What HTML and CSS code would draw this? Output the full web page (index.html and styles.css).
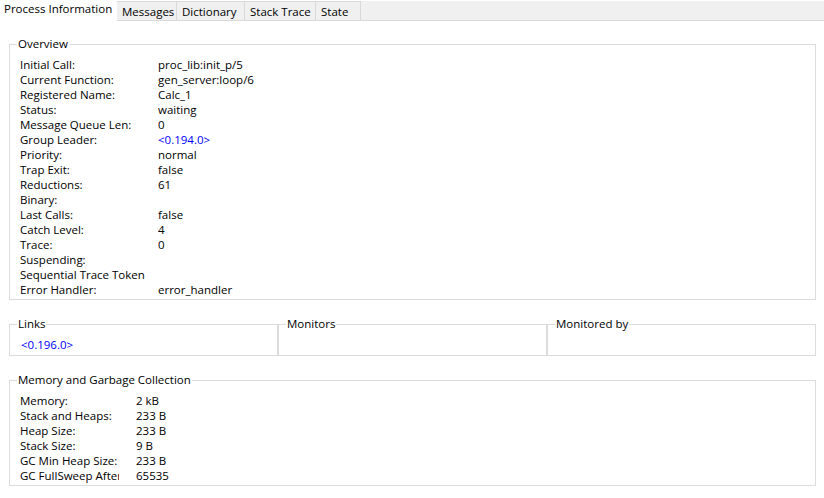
FILE: index.html
```html
<!DOCTYPE html>
<html>
<head>
<meta charset="utf-8">
<link rel="stylesheet" href="styles.css">
</head>
<body>
<div class="tabs">
  <div class="tab active w-proc">Process Information</div>
  <div class="tab w-msg">Messages</div>
  <div class="tab w-dict">Dictionary</div>
  <div class="tab w-stack">Stack Trace</div>
  <div class="tab w-state">State</div>
  <div class="tab-fill"></div>
</div>
<div class="page">
  <fieldset class="group">
    <legend>Overview</legend>
    <div class="grid overview">
      <span>Initial Call:</span><span>proc_lib:init_p/5</span>
      <span>Current Function:</span><span>gen_server:loop/6</span>
      <span>Registered Name:</span><span>Calc_1</span>
      <span>Status:</span><span>waiting</span>
      <span>Message Queue Len:</span><span>0</span>
      <span>Group Leader:</span><span class="link">&lt;0.194.0&gt;</span>
      <span>Priority:</span><span>normal</span>
      <span>Trap Exit:</span><span>false</span>
      <span>Reductions:</span><span>61</span>
      <span>Binary:</span><span></span>
      <span>Last Calls:</span><span>false</span>
      <span>Catch Level:</span><span>4</span>
      <span>Trace:</span><span>0</span>
      <span>Suspending:</span><span></span>
      <span>Sequential Trace Token</span><span></span>
      <span>Error Handler:</span><span>error_handler</span>
    </div>
  </fieldset>
  <div class="triple">
    <fieldset class="group small">
      <legend>Links</legend>
      <div class="list"><span class="link">&lt;0.196.0&gt;</span></div>
    </fieldset>
    <fieldset class="group small">
      <legend>Monitors</legend>
      <div class="list"></div>
    </fieldset>
    <fieldset class="group small">
      <legend>Monitored by</legend>
      <div class="list"></div>
    </fieldset>
  </div>
  <fieldset class="group">
    <legend>Memory and Garbage Collection</legend>
    <div class="grid memory">
      <span>Memory:</span><span>2 kB</span>
      <span>Stack and Heaps:</span><span>233 B</span>
      <span>Heap Size:</span><span>233 B</span>
      <span>Stack Size:</span><span>9 B</span>
      <span>GC Min Heap Size:</span><span>233 B</span>
      <span>GC FullSweep After</span><span>65535</span>
    </div>
  </fieldset>
</div>
</body>
</html>
```
FILE: styles.css
```css
html, body {
  margin: 0;
  padding: 0;
  background: #ffffff;
}
body {
  font-family: "Open Sans", "Noto Sans", sans-serif;
  font-size: 11.5px;
  color: #000000;
  width: 824px;
  height: 498px;
  overflow: hidden;
}
.tabs {
  display: flex;
  height: 21px;
  background: #ffffff;
}
.tab {
  box-sizing: border-box;
  flex: none;
  height: 20px;
  margin-top: 1px;
  padding: 0 0 0 5px;
  line-height: 19px;
  background: #f0f0f0;
  border: 1px solid #d9d9d9;
  border-left: none;
  white-space: nowrap;
  overflow: hidden;
}
.tab.active {
  height: 21px;
  margin-top: 0;
  padding: 0 0 0 4px;
  line-height: 17px;
  background: #ffffff;
  border: none;
}
.w-proc { width: 117px; }
.w-msg { width: 60px; }
.w-dict { width: 68px; }
.w-stack { width: 71px; }
.w-state { width: 45px; }
.tab-fill {
  flex: 1;
  box-sizing: border-box;
  height: 20px;
  margin-top: 1px;
  background: #f0f0f0;
  border-top: 1px solid #f0f0f0;
  border-bottom: 1px solid #d9d9d9;
}
.page {
  padding: 15px 8px 0 9px;
  display: flex;
  flex-direction: column;
  gap: 16px;
}
.group {
  margin: 0;
  padding: 5px 7px 2px 7px;
  border: 1px solid #dcdcdc;
  min-width: 0;
}
.group legend {
  padding: 0 1px;
  line-height: 16px;
}
.grid {
  display: grid;
  margin-left: 3px;
  line-height: 15px;
}
.grid span {
  white-space: nowrap;
  overflow: hidden;
}
.overview {
  grid-template-columns: 138px 1fr;
}
.memory {
  grid-template-columns: 99px 1fr;
  column-gap: 17px;
}
.triple {
  display: grid;
  grid-template-columns: repeat(3, 1fr);
}
.group.small {
  padding-bottom: 3px;
}
.list {
  margin-left: 4px;
  height: 15px;
  line-height: 15px;
}
.link {
  color: #0000ff;
}
```
